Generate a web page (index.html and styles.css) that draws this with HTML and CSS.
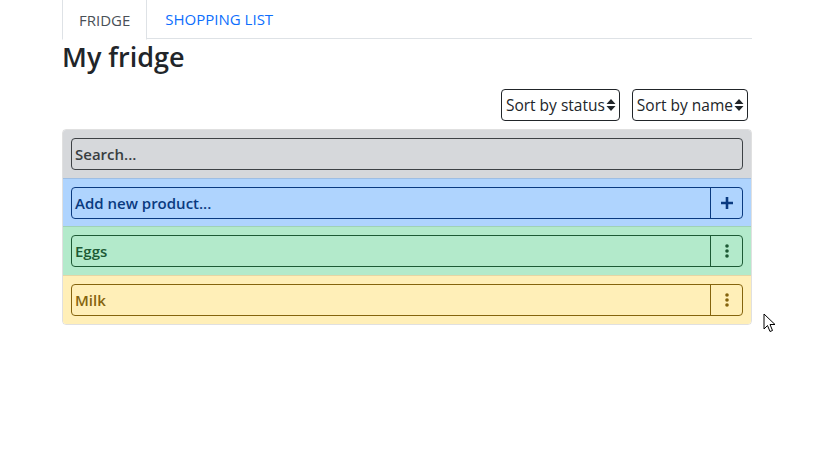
FILE: index.html
```html
<!DOCTYPE html>
<html>
<head>
<meta charset="utf-8">
<link rel="stylesheet" href="styles.css">
</head>
<body>
<div class="container">
  <nav class="tabs">
    <a class="tab active">FRIDGE</a>
    <a class="tab">SHOPPING LIST</a>
  </nav>
  <h2 class="title">My fridge</h2>
  <div class="sorts">
    <div class="select">Sort by status<svg class="caret" viewBox="0 0 10 14" width="10" height="14"><path d="M5 1 L9.5 6 H0.5 Z M5 13 L9.5 8 H0.5 Z" fill="#212529"/></svg></div>
    <div class="select">Sort by name<svg class="caret" viewBox="0 0 10 14" width="10" height="14"><path d="M5 1 L9.5 6 H0.5 Z M5 13 L9.5 8 H0.5 Z" fill="#212529"/></svg></div>
  </div>
  <div class="list">
    <div class="item grey">
      <div class="field"><span class="text">Search...</span></div>
    </div>
    <div class="item blue short">
      <div class="field"><span class="text">Add new product...</span>
        <span class="btn"><svg viewBox="0 0 16 16" width="16" height="16"><path d="M8 2 V14 M2 8 H14" stroke="#0a3a80" stroke-width="2.6"/></svg></span>
      </div>
    </div>
    <div class="item green">
      <div class="field"><span class="text">Eggs</span>
        <span class="btn"><svg viewBox="0 0 6 16" width="6" height="16"><circle cx="3" cy="3" r="1.8" fill="#1d5a35"/><circle cx="3" cy="8" r="1.8" fill="#1d5a35"/><circle cx="3" cy="13" r="1.8" fill="#1d5a35"/></svg></span>
      </div>
    </div>
    <div class="item yellow">
      <div class="field"><span class="text">Milk</span>
        <span class="btn"><svg viewBox="0 0 6 16" width="6" height="16"><circle cx="3" cy="3" r="1.8" fill="#85640d"/><circle cx="3" cy="8" r="1.8" fill="#85640d"/><circle cx="3" cy="13" r="1.8" fill="#85640d"/></svg></span>
      </div>
    </div>
  </div>
</div>
<svg class="cursor" viewBox="0 0 14 20" width="14" height="20"><path d="M1 1 V16 L4.5 12.5 L7 18.5 L9.5 17.5 L7 11.5 H12 Z" fill="#fff" stroke="#000" stroke-width="1"/></svg>
</body>
</html>
```
FILE: styles.css
```css
* { box-sizing: border-box; }
body {
  margin: 0;
  font-family: "Open Sans", "Noto Sans", sans-serif;
  color: #212529;
  background: #fff;
}
.container {
  width: 690px;
  margin-left: 62px;
}
.tabs {
  display: flex;
  border-bottom: 1px solid #dee2e6;
  height: 39px;
}
.tab {
  display: flex;
  align-items: center;
  padding: 0 16px;
  font-size: 15px;
  color: #0d6efd;
  height: 39px;
  border: 1px solid transparent;
  border-top: none;
}
.tab.active {
  color: #495057;
  border-color: #dee2e6;
  border-bottom-color: #fff;
  background: #fff;
  height: 40px;
}
.tab + .tab { padding-left: 17px; }
.title {
  margin: 0;
  font-size: 27px;
  font-weight: 600;
  line-height: 36px;
  height: 38px;
}
.sorts {
  display: flex;
  justify-content: flex-end;
  gap: 12px;
  padding-right: 4px;
  margin-top: 12px;
}
.select {
  display: flex;
  align-items: center;
  height: 32px;
  padding: 0 3px 0 4px;
  border: 1px solid #212529;
  border-radius: 4px;
  font-size: 15.5px;
  gap: 1px;
}
.caret { display: block; }
.list {
  margin-top: 8px;
  border: 1px solid rgba(0,0,0,.12);
  border-radius: 4px;
  overflow: hidden;
}
.item {
  padding: 8px;
  height: 48px;
}
.item + .item { border-top: 1px solid rgba(0,0,0,.1); height: 49px; }
.item.short { height: 48px; }
.grey { background: #d6d8db; color: #383d41; }
.blue { background: #afd4fe; color: #0a3a80; }
.green { background: #b3eacb; color: #1d5a35; }
.yellow { background: #ffefb8; color: #85640d; }
.field {
  display: flex;
  align-items: stretch;
  height: 32px;
  border: 1px solid currentColor;
  border-radius: 4px;
}
.grey .field { border-color: #3d4145; }
.text {
  flex: 1;
  display: flex;
  align-items: center;
  padding-left: 3px;
  font-size: 15px;
  font-weight: 600;
}
.btn {
  width: 32px;
  display: flex;
  align-items: center;
  justify-content: center;
  border-left: 1px solid currentColor;
}
.cursor {
  position: absolute;
  left: 763px;
  top: 313px;
}
```
